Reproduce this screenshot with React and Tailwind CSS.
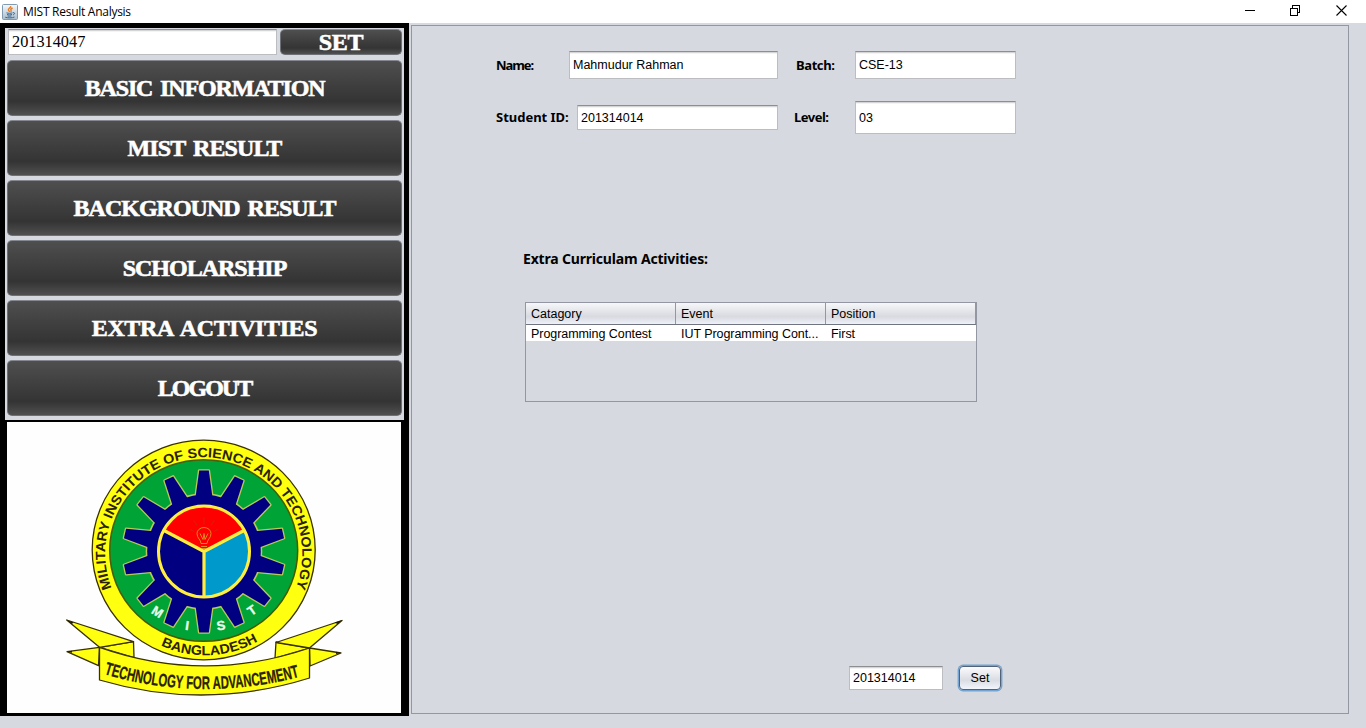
import React from "react";

const NAV = [
  { label: "BASIC INFORMATION", spacing: "tracking-[-1.15px] [word-spacing:3px]" },
  { label: "MIST RESULT", spacing: "tracking-[-0.9px] [word-spacing:3px]" },
  { label: "BACKGROUND RESULT", spacing: "tracking-[-1px] [word-spacing:3px]" },
  { label: "SCHOLARSHIP", spacing: "tracking-[-1px]" },
  { label: "EXTRA ACTIVITIES", spacing: "tracking-[-0.4px] [word-spacing:3px]" },
  { label: "LOGOUT", spacing: "tracking-[-2px]" },
];

const DARK_BUTTON =
  "flex items-center justify-center rounded-[5px] border border-[#6d7076] border-t-[#85898f] bg-linear-to-b from-[#4f4f4f] via-[#343434] via-75% to-[#505050] font-['Liberation_Serif',serif] text-[24px] leading-none font-bold text-white [-webkit-text-stroke:0.6px_white]";

const FIELD =
  "flex items-center border border-[#bcbdc0] border-t-[#8d8e91] bg-white pt-px pl-[3px] whitespace-pre text-black shadow-[inset_0_1px_0_#d5d5d5,inset_0_2px_0_#f4f4f4]";

function JavaIcon() {
  return (
    <svg width="16" height="16" viewBox="0 0 16 16" className="shrink-0">
      <defs>
        <linearGradient id="cupTile" x1="0" y1="0" x2="0" y2="1">
          <stop offset="0" stopColor="#f6f9fb" />
          <stop offset="1" stopColor="#a9bccb" />
        </linearGradient>
      </defs>
      <rect x="0.5" y="0.5" width="15" height="15" rx="1" fill="url(#cupTile)" stroke="#7f9bb1" />
      <path d="M8.600 2c1 1.600-3 2.300-2.200 4 .4.900 1.200 1.200 1 2M10.600 4c-1.500.7-2.300 1.200-1.600 2.200.5.800.2 1.300-.4 1.800" fill="none" stroke="#ec7a1c" strokeWidth="1.400" />
      <path d="M4.500 8.800c1.800.7 4.500.7 6 0M5 10.400c1.500.6 3.700.6 5 0M5.500 11.900c1.200.4 2.900.4 4 0M3.200 13.200c2.500.9 7 .9 9.300-.2M11 8.700c2-.5 2.300 1.400 0 2.200" fill="none" stroke="#3d6a94" strokeWidth="1" />
    </svg>
  );
}

const TEETH = Array.from({ length: 14 }, (_, i) => (i * 360) / 14);
const ribbon = { fill: "#ffff10", stroke: "#3a3000", strokeWidth: 1.3, strokeLinejoin: "round" };

function Emblem() {
  return (
    <svg width="394" height="291" viewBox="7 422 394 291" className="block">
      <defs>
        <path id="ringTop" d="M 111.600 588 A 98.500 96.500 0 1 1 295.800 588" />
        <path id="ringBottom" d="M 159 644.600 A 105 104.500 0 0 0 262 638.600" />
        <path id="bannerLine" d="M 102 673.500 Q 200 703 301 676.500" />
      </defs>

      <ellipse cx="203.700" cy="550" rx="111.500" ry="109.800" fill="#ffff10" stroke="#3a3000" strokeWidth="1.300" />
      <ellipse cx="203.700" cy="550.500" rx="94" ry="90.800" fill="#00a335" stroke="#4a5a00" strokeWidth="1.500" />

      <g transform="translate(204 551.500)">
        <g stroke="#b9c95a" strokeWidth="2.600" strokeLinejoin="round" fill="#000080">
          <circle r="57" />
          {TEETH.map((a) => (
            <path key={a} transform={`rotate(${a})`} d="M-8.500 -54 L-4.800 -81 L4.800 -81 L8.500 -54" />
          ))}
        </g>
        <g fill="#000080">
          <circle r="56.800" />
          {TEETH.map((a) => (
            <path key={a} transform={`rotate(${a})`} d="M-8.500 -54 L-4.800 -81 L4.800 -81 L8.500 -54Z" />
          ))}
        </g>
        <circle r="45.500" fill="#000080" />
        <path d="M0 0 L-40 -21 A45.500 45.500 0 0 1 40 -21Z" fill="#ff0000" />
        <path d="M0 0 L40 -21 A45.500 45.500 0 0 1 0 45.500Z" fill="#0099cc" />
        <circle r="45.500" fill="none" stroke="#ffee40" strokeWidth="3" />
        <path d="M0 0 L-40 -21 M0 0 L40 -21 M0 0 V45" stroke="#ffee40" strokeWidth="3.200" />
        <g fill="none" stroke="#e08a20" strokeWidth="1">
          <path d="M-3 -8 C-3 -12 -7 -13 -7 -18 A7 6 0 0 1 7 -18 C7 -13 3 -12 3 -8Z M-4 -18 L-1 -12 L0 -18 L1 -12 L4 -18 M-3 -5 H3 M-2 -3 H2" />
          <path d="M0 -27 V-34 M-7 -26 L-10 -31 M7 -26 L10 -31 M-10 -20 L-14 -22 M10 -20 L14 -22" strokeWidth="0.700" stroke="#c03010" />
        </g>
      </g>

      <g className="font-['Liberation_Sans',sans-serif] font-bold" fill="#2a2200">
        <text fontSize="13.500">
          <textPath href="#ringTop" textLength="376" lengthAdjust="spacingAndGlyphs">
            MILITARY INSTITUTE OF SCIENCE AND TECHNOLOGY
          </textPath>
        </text>
        <text fontSize="13.500">
          <textPath href="#ringBottom" startOffset="2" textLength="101" lengthAdjust="spacingAndGlyphs">
            BANGLADESH
          </textPath>
        </text>
      </g>

      <g className="font-['Liberation_Sans',sans-serif] font-bold" fill="#eafff0" stroke="#eafff0" strokeWidth="0.300" fontSize="13" textAnchor="middle">
        <text transform="translate(155 615.500) rotate(32)">M</text>
        <text transform="translate(186.500 630) rotate(8)">I</text>
        <text transform="translate(221.500 630) rotate(-8)">S</text>
        <text transform="translate(254.500 614) rotate(-35)">T</text>
      </g>

      <path {...ribbon} d="M67 651.700 L99.500 647.300 L98.500 665.700Z" />
      <path {...ribbon} d="M99.500 647.300 L133.500 641.700 L134 657.500Z" />
      <path {...ribbon} d="M66.700 620 L133.500 641.700 L99.500 647.300Z" />
      <path {...ribbon} d="M341 653 L309.500 648 L310 666Z" />
      <path {...ribbon} d="M276 642 L309.500 648 L275 658Z" />
      <path {...ribbon} d="M342 620.500 L276 642.500 L309.500 648Z" />
      <path {...ribbon} d="M99.500 647.300 Q204 684 309.500 648 V678 Q204 711 99.500 680Z" />
      <path d="M66.700 620 l7 2.500 l-2 1.500Z M342.500 620 l-8 2.500 l3 1.500Z M341 653 l-5 -1.200 v2.200Z M67 651.700 l5 -1 v2Z" fill="#201a00" />
      <text className="font-['Liberation_Sans',sans-serif] font-bold" fontSize="18" fill="#2a2200" stroke="#2a2200" strokeWidth="0.250">
        <textPath href="#bannerLine" startOffset="2" textLength="198" lengthAdjust="spacingAndGlyphs">
          TECHNOLOGY FOR ADVANCEMENT
        </textPath>
      </text>
    </svg>
  );
}

function TitleBar() {
  return (
    <header className="flex h-[23px] items-center bg-white pl-[2px]">
      <JavaIcon />
      <span className="ml-[5px] font-['Open_Sans',sans-serif] text-[12px] leading-[16px] tracking-[-0.27px] text-black">
        MIST Result Analysis
      </span>
      <svg width="102" height="11" viewBox="-4 0 102 11" className="mr-[19px] mb-[2px] ml-auto" fill="none" stroke="#000" shapeRendering="crispEdges">
        <path d="M-4 5.500H6" />
        <path d="M41.500 3.500h7v7h-7zM43.500 3v-2.500h7v7h-2.500" />
        <path d="M87.500 0.500l10 10M97.500 0.500l-10 10" shapeRendering="auto" strokeWidth="1.100" />
      </svg>
    </header>
  );
}

function Sidebar() {
  return (
    <aside className="flex h-[693px] w-[409px] shrink-0 flex-col bg-black pt-[5px] pl-[5px]">
      <div className="h-[392px] w-[399px] bg-[#d6d9df] px-[2px] pt-px">
        <div className="flex h-[27px] gap-[3px] pl-px">
          <div className={`${FIELD} h-[26px] w-[269px] font-['Liberation_Serif',serif] text-[16.3px] leading-none`}>201314047</div>
          <button className={`${DARK_BUTTON} h-[26px] w-[122px] tracking-[-0.3px]`}>SET</button>
        </div>
        <nav className="mt-[4px] flex flex-col gap-[4px]">
          {NAV.map(({ label, spacing }) => (
            <button key={label} className={`${DARK_BUTTON} h-[56px] w-[395px] pb-px ${spacing}`}>
              {label}
            </button>
          ))}
        </nav>
      </div>
      <div className="mt-[2px] ml-[2px] h-[291px] w-[394px] bg-[#fefefe]">
        <Emblem />
      </div>
    </aside>
  );
}

const LABEL = "font-['Noto_Sans',sans-serif] text-[13px] leading-none font-bold text-black";
const COLUMNS = ["Catagory", "Event", "Position"];
const ROW = ["Programming Contest", "IUT Programming Cont...", "First"];

function Details() {
  return (
    <main className="mt-[2px] ml-[2px] flex h-[689px] w-[938px] flex-col border border-[#9297a1] font-['Liberation_Sans',sans-serif] text-[12.5px] leading-none">
      <section className="mt-[25px] ml-[84px] flex h-[28px] items-center">
        <span className={`${LABEL} w-[73px] tracking-[-1.1px]`}>Name:</span>
        <div className={`${FIELD} h-[28px] w-[209px]`}>Mahmudur Rahman</div>
        <span className={`${LABEL} ml-[18px] w-[59px] tracking-[-0.4px]`}>Batch:</span>
        <div className={`${FIELD} h-[28px] w-[161px]`}>CSE-13</div>
      </section>
      <section className="mt-[22px] ml-[84px] flex h-[33px] items-center">
        <span className={`${LABEL} w-[81px] tracking-[-0.02px] whitespace-nowrap`}>Student ID:</span>
        <div className={`${FIELD} h-[25px] w-[201px]`}>201314014</div>
        <span className={`${LABEL} ml-[16px] w-[61px] tracking-[-0.5px]`}>Level:</span>
        <div className={`${FIELD} h-[33px] w-[161px]`}>03</div>
      </section>
      <h2 className="mt-[118px] ml-[111px] font-['Noto_Sans',sans-serif] text-[14px] leading-[14px] font-bold tracking-[-0.18px] text-black">
        Extra Curriculam Activities:
      </h2>
      <div className="mt-[36px] ml-[113px] h-[100px] w-[452px] border border-[#9297a1]">
        <div className="flex h-[22px] border-b border-[#6f7480] bg-linear-to-b from-[#f6f7f9] via-[#d8dae0] via-65% to-[#eef1f8]">
          {COLUMNS.map((c) => (
            <div key={c} className="flex w-[150px] items-center border-r border-[#9297a1] pt-px pl-[5px]">
              {c}
            </div>
          ))}
        </div>
        <div className="flex h-[16px] bg-white">
          {ROW.map((c) => (
            <div key={c} className="flex w-[150px] items-center pt-[2px] pl-[5px] tracking-[-0.06px] whitespace-nowrap">
              {c}
            </div>
          ))}
        </div>
      </div>
      <section className="mt-[262px] ml-[437px] flex h-[28px] items-center">
        <div className={`${FIELD} h-[24px] w-[94px]`}>201314014</div>
        <button className="ml-[16px] h-[24px] w-[42px] rounded-[4px] border border-[#51637a] bg-linear-to-b from-[#fbfbfc] via-[#d9dce2] via-60% to-[#f2f5fb] pt-px shadow-[0_0_0_1.4px_#73a4d1]">
          Set
        </button>
      </section>
    </main>
  );
}

export default function App() {
  return (
    <div className="h-[728px] w-[1366px] overflow-hidden bg-[#d6d9df]">
      <TitleBar />
      <div className="flex items-start">
        <Sidebar />
        <Details />
      </div>
    </div>
  );
}
